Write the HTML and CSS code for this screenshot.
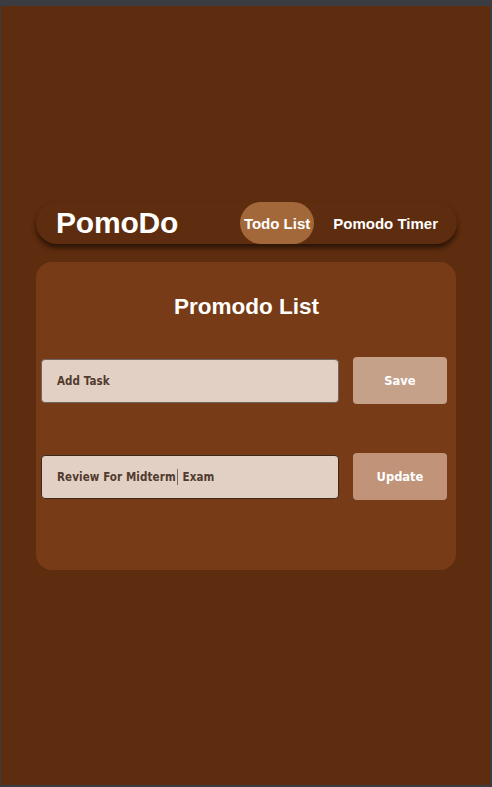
FILE: index.html
```html
<!DOCTYPE html>
<html lang="en">
<head>
<meta charset="utf-8">
<title>PomoDo</title>
<link rel="stylesheet" href="styles.css">
</head>
<body>
<div class="app">
  <nav class="navbar">
    <div class="brand">PomoDo</div>
    <div class="links">
      <a class="link active">Todo List</a>
      <a class="link">Pomodo Timer</a>
    </div>
  </nav>
  <main class="card">
    <h1 class="title">Promodo List</h1>
    <div class="row">
      <div class="field">Add Task</div>
      <button class="btn">Save</button>
    </div>
    <div class="row row-second">
      <div class="field field-focus">Review For Midterm<span class="caret"></span> Exam</div>
      <button class="btn btn-update">Update</button>
    </div>
  </main>
</div>
</body>
</html>
```

FILE: styles.css
```css
html, body {
  margin: 0;
  height: 100%;
}
body {
  background: #3b3c41;
  padding: 6px 2px 2px 1px;
  box-sizing: border-box;
  font-family: "Liberation Sans", Arial, sans-serif;
}
.app {
  background: #5e2c0e;
  height: 100%;
  padding-top: 196px;
  padding-left: 35px;
  box-sizing: border-box;
}
.navbar {
  width: 421px;
  height: 42px;
  box-sizing: border-box;
  border-radius: 21px;
  background: #5e2c0e;
  box-shadow: 0 4px 5px rgba(0, 0, 0, 0.55);
  display: flex;
  align-items: center;
  justify-content: space-between;
  padding: 0 15px 0 20px;
}
.brand {
  color: #fff;
  font-weight: bold;
  font-size: 30px;
  letter-spacing: -0.2px;
}
.links {
  display: flex;
  align-items: center;
  gap: 15px;
  height: 100%;
}
.link {
  color: #fff;
  font-weight: bold;
  font-size: 15px;
  height: 42px;
  display: flex;
  align-items: center;
  padding: 0 4px;
  border-radius: 21px;
}
.link.active {
  background: #a3683a;
  padding: 0 4px;
}
.card {
  margin-top: 18px;
  width: 420px;
  height: 308px;
  box-sizing: border-box;
  background: #773c17;
  border-radius: 16px;
  padding: 31px 9px 0 5px;
}
.title {
  margin: 0 0 37px;
  padding-left: 5px;
  text-align: center;
  color: #fff;
  font-size: 22.5px;
  font-weight: bold;
  line-height: 27px;
}
.row {
  display: flex;
  align-items: center;
  justify-content: space-between;
  height: 47px;
}
.row-second {
  margin-top: 49px;
}
.field {
  width: 298px;
  height: 44px;
  box-sizing: border-box;
  border: 1.5px solid #6e6760;
  border-radius: 4px;
  background: #e3d0c5;
  color: #503b2e;
  font-family: "DejaVu Sans Condensed", "DejaVu Sans", sans-serif;
  font-stretch: condensed;
  font-weight: bold;
  font-size: 11.5px;
  letter-spacing: 0.1px;
  display: flex;
  align-items: center;
  padding-left: 15px;
  white-space: pre;
}
.field-focus {
  border-color: #3b2a1c;
}
.caret {
  display: inline-block;
  width: 1px;
  height: 16px;
  background: #7a6a5e;
  margin: 0 1px;
}
.btn {
  width: 94px;
  height: 47px;
  border: none;
  border-radius: 4px;
  background: #c6a189;
  color: #fff;
  font-family: "DejaVu Sans", sans-serif;
  font-weight: bold;
  font-size: 11.5px;
  padding: 0;
}
.btn-update {
  background: #c19479;
}
```
